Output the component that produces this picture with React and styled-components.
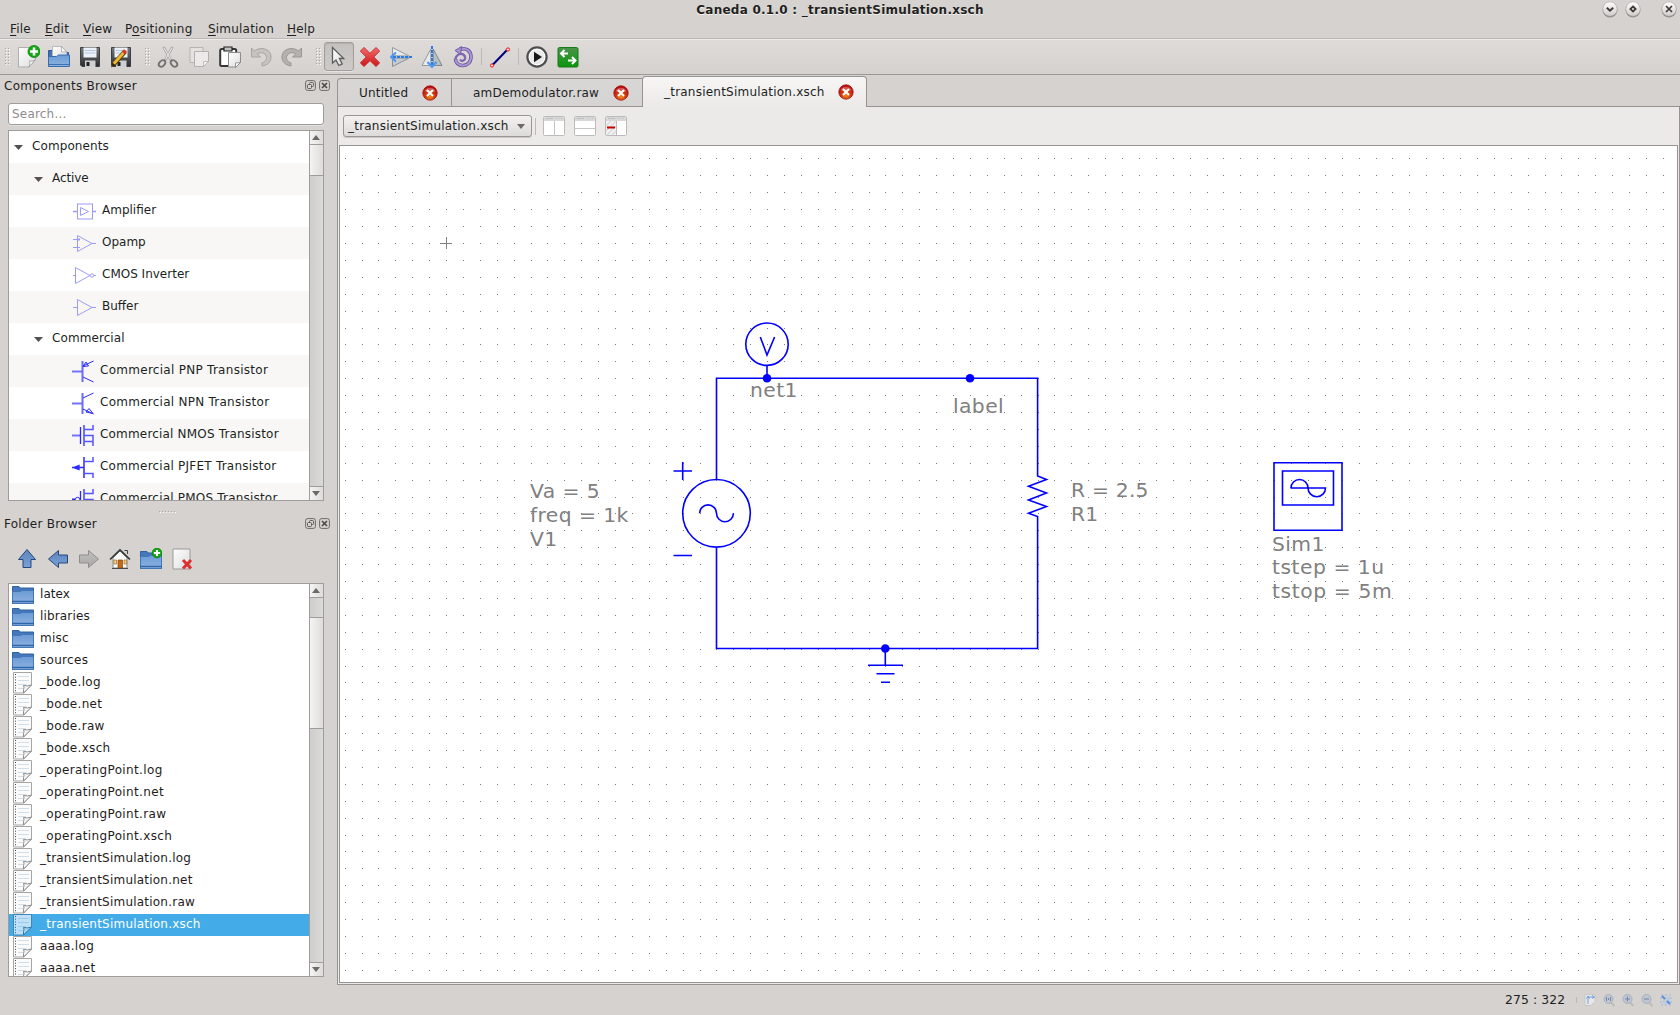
import React from "react";
import styled, { createGlobalStyle, css } from "styled-components";

const Global = createGlobalStyle`
  * { box-sizing: border-box; }
  html, body { margin: 0; padding: 0; overflow: hidden; }
  body { background: #d6d2cf; }
  svg { display: block; flex: none; }
`;

const Window = styled.div`
  width: 1680px;
  height: 1015px;
  display: flex;
  flex-direction: column;
  background: #d6d2cf;
  color: #221f1e;
  font: 12px/16px "DejaVu Sans", Verdana, sans-serif;
  letter-spacing: 0.2px;
  white-space: nowrap;
  overflow: hidden;
`;

/* ---------- title bar ---------- */
const TitleBar = styled.header`
  height: 19px;
  display: grid;
  grid-template-columns: 1fr auto 1fr;
  align-items: start;
`;
const Title = styled.h1`
  margin: 0;
  font-size: 12px;
  line-height: 20px;
  letter-spacing: 0.25px;
  text-shadow: 0 1px 0 #f4f2f1;
`;
const WindowButtons = styled.div`
  display: flex;
  justify-content: flex-end;
  padding-right: 2px;
`;

/* ---------- menu ---------- */
const MenuBar = styled.nav`
  height: 19px;
  padding: 0 0 0 10px;
  display: flex;
  line-height: 20px;
`;
const MenuItem = styled.span`
  width: ${(p) => p.$w}px;
  u { text-underline-offset: 2px; text-decoration-thickness: 1px; }
`;

/* ---------- toolbar ---------- */
const ToolBar = styled.div`
  height: 37px;
  border-top: 1px solid #bdb9b6;
  border-bottom: 1px solid #9c9896;
  box-shadow: inset 0 1px 0 #eceae8;
  background: linear-gradient(#dfdbd8, #d5d1ce);
  display: flex;
  align-items: center;
`;
const Handle = styled.span`
  width: ${(p) => p.$w}px;
  height: 18px;
  padding-left: ${(p) => p.$pad}px;
`;
const Tool = styled.button`
  width: 31px;
  height: 29px;
  padding: 0;
  border: 0;
  background: none;
  display: flex;
  align-items: center;
  justify-content: center;
  ${(p) => p.$pressed && css`
    border: 1px solid #a29e9b;
    border-radius: 3px;
    margin: 0 0 0 1px;
    width: 30px;
    background: linear-gradient(#c4c1be, #cdcac7);
    box-shadow: inset 0 1px 1px #b3afac, 0 1px 0 #e6e4e2;
  `}
`;
const Separator = styled.span`
  width: ${(p) => p.$w || 6}px;
  height: ${(p) => p.$h || 17}px;
  border-left: 1px solid #bcb8b5;
  margin-left: ${(p) => p.$ml || 0}px;
`;

/* ---------- work area ---------- */
const Main = styled.div`
  height: 910px;
  display: flex;
`;
const Side = styled.aside`
  width: 337px;
  display: flex;
  flex-direction: column;
`;
const DockTitle = styled.div`
  height: ${(p) => p.$h}px;
  padding: 3px 7px 0 4px;
  display: flex;
  align-items: flex-start;
  justify-content: space-between;
  letter-spacing: 0.25px;
`;
const DockButtons = styled.span`
  display: flex;
  gap: 3px;
  padding-top: 2px;
`;
const Search = styled.input.attrs({ placeholder: "Search..." })`
  width: 316px;
  height: 22px;
  margin: 0 0 5px 8px;
  padding: 0 3px;
  border: 1px solid #9f9b99;
  border-radius: 3px;
  background: #fff;
  font: inherit;
  letter-spacing: 0.2px;
  outline: none;
  box-shadow: 0 1px 0 #e4e1df;
  &::placeholder { color: #8f8c8b; opacity: 1; }
`;
const Box = styled.div`
  width: 316px;
  height: ${(p) => p.$h}px;
  margin-left: 8px;
  border: 1px solid #a09c9a;
  background: #fff;
  display: flex;
  overflow: hidden;
`;
const Rows = styled.div`
  width: 300px;
  overflow: hidden;
`;
const RowText = styled.span`
  padding-bottom: 2px;
  letter-spacing: ${(p) => p.$ls}px;
`;
const TreeRow = styled.div`
  height: 32px;
  display: flex;
  align-items: center;
  background: ${(p) => (p.$odd ? "#f8f7f5" : "#fff")};
  padding-left: ${(p) => p.$indent}px;
  gap: ${(p) => p.$gap}px;
`;
const FileRow = styled.div`
  height: 22px;
  display: flex;
  align-items: center;
  gap: 6px;
  padding-left: 3px;
  color: ${(p) => (p.$selected ? "#fff" : "#1f1c1b")};
  background: ${(p) => (p.$selected ? "#43ace8" : "transparent")};
`;
const ScrollBar = styled.div`
  width: 14px;
  border-left: 1px solid #a09c9a;
  background: linear-gradient(90deg, #cfcecd, #dadad9);
  display: flex;
  flex-direction: column;
`;
const ScrollPart = styled.span`
  height: ${(p) => p.$h}px;
  padding-right: 1px;
  background: ${(p) => (p.$trough ? "transparent" : "linear-gradient(90deg, #f4f4f3, #dddcdb)")};
  border-bottom: ${(p) => (p.$line ? "1px solid #a09c9a" : "0")};
  display: flex;
  align-items: center;
  justify-content: center;
`;
const Splitter = styled.div`
  height: 12px;
  display: flex;
  justify-content: center;
  padding: 10px 2px 0 0;
`;
const FolderTools = styled.div`
  display: flex;
  height: 38px;
  margin-bottom: 5px;
  padding-left: 11px;
  align-items: center;
`;

/* ---------- documents ---------- */
const Docs = styled.main`
  width: 1343px;
  display: flex;
  flex-direction: column;
`;
const Tabs = styled.div`
  height: 32px;
  display: flex;
  align-items: flex-end;
  border-bottom: 1px solid #979391;
`;
const Tab = styled.div`
  width: ${(p) => p.$w}px;
  height: ${(p) => (p.$active ? 31 : 28)}px;
  margin-bottom: ${(p) => (p.$active ? -1 : 0)}px;
  padding: 0 ${(p) => p.$pr}px ${(p) => (p.$active ? 1 : 0)}px 21px;
  display: flex;
  justify-content: space-between;
  align-items: center;
  letter-spacing: 0.22px;
  border: 1px solid #979391;
  border-bottom: 0;
  border-left-width: ${(p) => (p.$first || p.$active ? 1 : 0)}px;
  border-right-width: ${(p) => (p.$beforeActive ? 0 : 1)}px;
  border-radius: ${(p) => (p.$active ? "4px 4px 0 0" : p.$first ? "4px 0 0 0" : "0")};
  background: ${(p) => (p.$active ? "linear-gradient(#f7f6f5, #ebeae9)" : "linear-gradient(#d9d7d6, #d6d4d3)")};
`;
const Pane = styled.section`
  flex: none;
  height: 878px;
  border: 1px solid #979391;
  border-top: 0;
  background: #ebeae9;
  padding: 0 1px 1px;
`;
const DocBar = styled.div`
  height: 38px;
  padding: 0 0 0 4px;
  display: flex;
  align-items: center;
`;
const Combo = styled.button`
  width: 189px;
  height: 22px;
  padding: 0 6px 0 4px;
  display: flex;
  align-items: center;
  justify-content: space-between;
  border: 1px solid #9a9694;
  border-radius: 3px;
  background: linear-gradient(#f3f2f1, #dddbda);
  box-shadow: 0 1px 0 #c9c7c5;
  color: inherit;
  font: inherit;
  letter-spacing: 0.22px;
`;
const ViewButtons = styled.div`
  display: flex;
  gap: 9px;
  margin-left: 2px;
`;
const Canvas = styled.div`
  width: 1339px;
  height: 838px;
  background: #fff;
  border: 1px solid #979391;
`;

/* ---------- status ---------- */
const Status = styled.footer`
  height: 30px;
  padding: 0 6px 0 1505px;
  display: flex;
  align-items: center;
`;
const Coordinates = styled.span`
  width: 72px;
  font-size: 12.4px;
  letter-spacing: 0.1px;
`;
const StatusIcons = styled.div`
  display: flex;
  gap: 3px;
  opacity: 0.75;
`;

/* ---------- icons ---------- */
const Svg = ({ s = 22, w, h, children, ...rest }) => (
  <svg width={w || s} height={h || s} viewBox={`0 0 ${w || s} ${h || s}`} fill="none" {...rest}>{children}</svg>
);

const HiddenSvg = styled.svg`
  position: absolute;
`;
const Defs = () => (
  <HiddenSvg width="0" height="0">
    <defs>
      <linearGradient id="paper" x1="0" y1="0" x2="1" y2="1"><stop offset="0" stopColor="#fff" /><stop offset="1" stopColor="#dcdcdc" /></linearGradient>
      <linearGradient id="blue" x1="0" y1="0" x2="0" y2="1"><stop offset="0" stopColor="#6b9bd6" /><stop offset="1" stopColor="#8fb2e0" /></linearGradient>
      <linearGradient id="arrow" x1="0" y1="0" x2="0" y2="1"><stop offset="0" stopColor="#5c84bd" /><stop offset="1" stopColor="#7aa2d8" /></linearGradient>
      <linearGradient id="grayArrow" x1="0" y1="0" x2="0" y2="1"><stop offset="0" stopColor="#c2c0be" /><stop offset="1" stopColor="#aaa7a5" /></linearGradient>
      <linearGradient id="steel" x1="0" y1="0" x2="0" y2="1"><stop offset="0" stopColor="#777b80" /><stop offset="1" stopColor="#292b2e" /></linearGradient>
      <linearGradient id="red" x1="0" y1="0" x2="0" y2="1"><stop offset="0" stopColor="#f26a6a" /><stop offset="1" stopColor="#cf1414" /></linearGradient>
      <linearGradient id="green" x1="0" y1="0" x2="0" y2="1"><stop offset="0" stopColor="#4b934b" /><stop offset="1" stopColor="#0b970b" /></linearGradient>
      <radialGradient id="ball" cx=".5" cy=".75" r=".6"><stop offset="0" stopColor="#f08b12" /><stop offset=".55" stopColor="#cf3c10" /><stop offset="1" stopColor="#ba0c0c" /></radialGradient>
      <linearGradient id="knob" x1="0" y1="0" x2="0" y2="1"><stop offset="0" stopColor="#fff" /><stop offset="1" stopColor="#cfcbc8" /></linearGradient>
    </defs>
  </HiddenSvg>
);

const WinButton = ({ kind, gap = 0 }) => (
  <Svg w={18 + gap} h={18} viewBox={`${-gap} 0 ${18 + gap} 18`}>
    <circle cx="9" cy="10" r="7.4" fill="#8f8b88" />
    <circle cx="9" cy="9" r="7.2" fill="url(#knob)" stroke="#aaa6a3" strokeWidth=".6" />
    {kind === "min" && <path d="M5.8 7.8 9 10.8l3.2-3" stroke="#3d3a38" strokeWidth="1.9" />}
    {kind === "max" && <path d="M9 6.4 11.6 9 9 11.6 6.4 9z" stroke="#3d3a38" strokeWidth="1.8" />}
    {kind === "close" && <path d="m6 6 6 6m0-6-6 6" stroke="#3d3a38" strokeWidth="1.7" />}
  </Svg>
);

const Grip = ({ cols, rows }) => (
  <Svg w={cols * 3} h={rows * 3}>
    {Array.from({ length: cols * rows }, (_, i) => {
      const x = (i % cols) * 3, y = Math.floor(i / cols) * 3;
      return <g key={i}><rect x={x + 1} y={y + 1} width="1" height="1" fill="#fff" /><rect x={x} y={y} width="1" height="1" fill="#a9a5a2" /></g>;
    })}
  </Svg>
);

const Plus = ({ x, y, r }) => (
  <g>
    <circle cx={x} cy={y} r={r} fill="#17a817" stroke="#078107" strokeWidth=".8" />
    <path d={`M${x - r * 0.65} ${y}h${r * 1.3}M${x} ${y - r * 0.65}v${r * 1.3}`} stroke="#fff" strokeWidth={r * 0.42} />
  </g>
);

const Floppy = () => (
  <>
    <path d="M1.5 1.5h19v19H3l-1.500-1.500z" fill="url(#steel)" stroke="#3c3f43" />
    <path d="M4.500 1.500h13v10h-13z" fill="#edf2f8" />
    <path d="M5.500 4.500h11M5.500 7h11" stroke="#b2c6df" />
    <path d="M6 14.500h10.500V21H6z" fill="#cfd0d1" />
    <path d="M7.500 16h3v4h-3z" fill="#202224" />
  </>
);

const icons = {
  new: <Svg s={24}><path d="M2.500 2.500h17v12l-6.500 7.500H2.500z" fill="url(#paper)" stroke="#b1afad" /><path d="M13 22c1-2.500 1-4 .5-6 2 .5 4 0 6-1.500z" fill="#fff" stroke="#999" strokeWidth=".8" /><Plus x={18} y={6.500} r={6} /></Svg>,
  open: <Svg s={24}><path d="M1.500 21V5.500h6l1 2h13V21z" fill="#4273b5" stroke="#2d5c9c" /><path d="M5.500 14V1.500h9l5 5V14z" fill="url(#paper)" stroke="#b9b9b9" /><path d="M14.500 1.500v5.500h5z" fill="#fff" stroke="#999" strokeWidth=".7" /><path d="M1.500 11.500h8l2-1.500h11v11.500h-21z" fill="url(#blue)" stroke="#386cae" /><path d="M2 19.500h20" stroke="#3d71b3" /></Svg>,
  save: <Svg><Floppy /></Svg>,
  saveas: <Svg><Floppy /><path d="M3.500 18.500 15 5.500" stroke="#4f3c0d" strokeWidth="4.600" /><path d="M3.800 17.800 14.300 5.900" stroke="#eeb72f" strokeWidth="3" /><path d="m13.300 7 2.200-2.500" stroke="#d23a2c" strokeWidth="4" /><path d="m1 21.500 1.500-4.500 2.500 2.200z" fill="#35250a" /></Svg>,
  cut: <Svg><path d="M6.500 1 14 14.500M15.500 1 8 14.500" stroke="#999795" strokeWidth="2.500" /><path d="M6.800 1.500 13.500 13.500M15.200 1.500 8.500 13.500" stroke="#e9e8e7" strokeWidth="1.200" /><ellipse cx="5" cy="17.500" rx="3.700" ry="2.600" transform="rotate(-45 5 17.500)" stroke="#73706f" strokeWidth="1.900" /><ellipse cx="17" cy="17.500" rx="3.700" ry="2.600" transform="rotate(45 17 17.500)" stroke="#73706f" strokeWidth="1.900" /></Svg>,
  copy: <Svg><path d="M2 1.500h13v15H2z" fill="#e4e1df" stroke="#b7b3b0" /><path d="M6.500 5.500H20.500v10l-5 5h-9z" fill="#eceae8" stroke="#b3afac" /><path d="M15.500 20.500v-5h5z" fill="#f7f6f5" stroke="#b3afac" strokeWidth=".8" /></Svg>,
  paste: <Svg><rect x="1.200" y="3" width="16" height="17" rx="1.500" fill="#fff" stroke="#373737" strokeWidth="2" /><path d="M5 1h8v4H5z" fill="#bfc0c1" stroke="#222" strokeWidth="1.200" /><path d="M9.500 6.500h12v10l-4.500 4.500H9.500z" fill="url(#paper)" stroke="#8d8d8d" /><path d="M16.500 21.500V17l5-.5z" fill="#fff" stroke="#808080" strokeWidth=".8" /></Svg>,
  undo: <Svg><path d="M1.500 2v9h9L7.300 8c3-2.200 8-1.500 9 2.500.7 3-1.300 5.500-4.300 6.500v3c5-.6 9.500-4 9-10C20.300 2.500 10 .3 4.500 5z" fill="#c6c3c0" stroke="#a9a5a2" /></Svg>,
  redo: <Svg><path d="M20.500 2v9h-9L14.700 8c-3-2.200-8-1.500-9 2.500-.7 3 1.300 5.500 4.300 6.500v3c-5-.6-9.500-4-9-10C1.700 2.500 12 .3 17.500 5z" fill="#b4b1ae" stroke="#9a9794" /></Svg>,
  pointer: <Svg><path d="M4.500 1.500v15.500l3.500-3 2.800 5.500 3.400-1.600-2.800-5.400h4.300z" fill="url(#paper)" stroke="#5e5e5e" strokeWidth="1.300" /></Svg>,
  delete: <Svg><path d="m5 1.500 6 5.800 6-5.800 3.700 3.600-5.900 5.900 5.900 5.900-3.700 3.600-6-5.800-6 5.800-3.700-3.600L7.200 11 1.300 5.100z" fill="url(#red)" stroke="#c2373a" /></Svg>,
  flipv: <Svg><path d="M2.500 1.500v8.300L19 10z" fill="#e9eaeb" stroke="#97999b" /><path d="M2.500 20.500v-8.300L19 12z" fill="#c9cccf" stroke="#8d9093" /><path d="M3 11h19" stroke="#2a7be0" strokeWidth="2" strokeDasharray="3 1" /><path d="M6 6.500 1 11l5 4.500" stroke="#4a98f4" strokeWidth="2" /></Svg>,
  fliph: <Svg><path d="M9.800 3v16.500H1z" fill="#e9eaeb" stroke="#97999b" /><path d="M12.200 3v16.500H21z" fill="#b9bec3" stroke="#83878b" /><path d="M11 0v19" stroke="#2a7be0" strokeWidth="2" strokeDasharray="3 1" /><path d="m6.500 16 4.500 5 4.500-5" stroke="#4a98f4" strokeWidth="2" /></Svg>,
  rotate: <Svg><path d="M8 3.500c6-2.500 11 1.500 11 7.500s-5 9-9 8.500-6.500-3.500-6.500-6.500" stroke="#6b519f" strokeWidth="3.600" /><path d="M8 3.500c6-2.500 11 1.500 11 7.500s-5 9-9 8.500-6.500-3.500-6.500-6.500" stroke="#aa99d2" strokeWidth="1.900" /><path d="M3.500 13.500c0-4 3.500-6 6.500-5.500s4.500 5 1.500 6.500c-1.500.7-3 0-3.500-1" stroke="#7f69b2" strokeWidth="2.300" /><path d="M9.500.5 3 4.500l5.500 4z" fill="#a594ce" stroke="#765dab" /></Svg>,
  wire: <Svg><path d="M4 18.500 18 4" stroke="#00007f" strokeWidth="2" /><circle cx="3" cy="19.500" r="1.600" fill="#fff" stroke="#f00" /><circle cx="19" cy="3.500" r="1.600" fill="#fff" stroke="#f00" /></Svg>,
  play: <Svg><circle cx="11" cy="11" r="9.600" fill="#fff" stroke="#4e4e4e" strokeWidth="2.200" /><circle cx="11" cy="11" r="7.300" fill="#e9e9e9" /><path d="m8 5.800 8 5.200-8 5.200z" fill="#161616" /></Svg>,
  swap: <Svg><rect x="1" y="1.500" width="20" height="19.500" rx="1.500" fill="url(#green)" stroke="#187a18" /><path d="M11 7.500H4M7.500 4 4 7.500 7.500 11M11 14.500h7.500M15 11l3.500 3.500L15 18" stroke="#fff" strokeWidth="2" /></Svg>,
};

const Folder = ({ plus }) => (
  <Svg w={22} h={plus ? 22 : 20}>
    <g transform={plus ? "translate(0 2)" : undefined}>
      <path d="M.5 18.500V1.500H7L8 3h13.500v15.500z" fill="#4477bc" stroke="#30629f" />
      <path d="M.5 6.500h8L10 5.500h11.500v13H.5z" fill="url(#blue)" stroke="#4377b8" />
      <path d="M0 16.500h22" stroke="#2e66a9" strokeWidth="1.500" />
    </g>
    {plus && <Plus x={17} y={5} r={4.800} />}
  </Svg>
);

const FileIcon = ({ selected }) => (
  <Svg w={22} h={22}>
    <path d="M1.500.5h18v12.500l-7.500 8H1.500z" fill={selected ? "#bfe0f6" : "#fbfbfb"} stroke={selected ? "#3c87b8" : "#a5a5a5"} />
    <path d="M6 4.500h11M6 8.500h11M6 12.500h8M6 16.500h5" stroke={selected ? "#98cdee" : "#cfdfea"} />
    <path d="M3.500 2v18" stroke={selected ? "#2c5c7d" : "#444"} strokeDasharray="1 1.700" />
    <path d="M11.500 21v-3.500q1-1.500 0-4 4 1 8-.5z" fill={selected ? "#a6d5f3" : "#f4f4f4"} stroke={selected ? "#2d7bae" : "#8e8e8e"} />
  </Svg>
);

const TabClose = () => (
  <Svg s={16}><circle cx="8" cy="8" r="7.200" fill="url(#ball)" stroke="#a50e0e" strokeWidth=".8" /><path d="M2.500 6.500a5.700 5 0 0 1 11 0q-5.500 1.500-11 0z" fill="#fff" opacity=".28" /><path d="m5 5 6 6m0-6-6 6" stroke="#fff" strokeWidth="2" /></Svg>
);

const DockButton = ({ close }) => (
  <Svg s={11}><rect x=".6" y=".6" width="9.800" height="9.800" rx="2" stroke="#6d6967" />
    {close ? <path d="m3 3 5 5m0-5-5 5" stroke="#4d4a48" strokeWidth="1.700" /> : <><rect x="4.500" y="2.500" width="4" height="4" rx="1" stroke="#5d5a58" /><rect x="2.500" y="4.500" width="4" height="4" rx="1" fill="#d6d2cf" stroke="#5d5a58" /></>}
  </Svg>
);

const Triangle = ({ w = 9, up, color = "#545150" }) => (
  <Svg w={w} h={5}><path d={up ? `M0 5 ${w / 2} 0 ${w} 5z` : `M0 0h${w}L${w / 2} 5z`} fill={color} /></Svg>
);

const arrowShapes = {
  up: "M11 1.500 19.500 11.500H15v8H7v-8H2.500z",
  left: "M1.500 11 11.500 2.500V7h9v8h-9v4.500z",
  right: "M20.500 11 10.500 2.500V7h-9v8h9v4.500z",
};
const Arrow = ({ dir, gray }) => (
  <Svg><path d={arrowShapes[dir]} fill={gray ? "url(#grayArrow)" : "url(#arrow)"} stroke={gray ? "#8f8c8a" : "#27477a"} /></Svg>
);
const Home = () => (
  <Svg><path d="M4 10v10h14V10l-7-7z" fill="#fafafa" stroke="#8c8c8c" /><path d="M1 11.500 11 2l10 9.500" stroke="#353b3d" strokeWidth="1.700" /><path d="M15.500 2.500h3V6" stroke="#454545" /><path d="M9 12h4.500v8H9z" fill="#c36a17" stroke="#8b4510" strokeWidth=".7" /><path d="M4.800 12h2.700v4H4.800zM15 12h2.700v4H15z" fill="#f6cf87" stroke="#a87c35" strokeWidth=".8" /><path d="M3 20.500h16" stroke="#4b4b4b" /></Svg>
);
const DeleteFile = () => (
  <Svg><path d="M2 1h17v20H2z" fill="url(#paper)" stroke="#9b9998" /><path d="m12 12 8 8.500m0-8.500-8 8.500" stroke="#dd3030" strokeWidth="3" /></Svg>
);

const Layout = ({ kind }) => (
  <Svg w={22} h={20}><rect x=".5" y=".5" width="21" height="19" rx="1" fill="#fff" stroke="#bcbaba" />
    <path d="M1 3h20" stroke="#d9d8d8" strokeWidth="4" /><path d="M3 2.500h7M13 2.500h1M15.500 2.500h1M18 2.500h1" stroke="#c1c0c0" />
    {kind === "cols" && <path d="M11.500 5v15" stroke="#c7c6c6" />}
    {kind === "rows" && <path d="M1 12.500h20" stroke="#c7c6c6" />}
    {kind === "close" && <><path d="M1 5h10v14H1z" fill="#f2f2f2" /><path d="m1 10 5-5M1 15 11 5M2 19 11 10M7 19l4-4" stroke="#dadada" strokeWidth="1.500" /><path d="M11.500 5v15" stroke="#bcbaba" /><path d="M2 11.500h8" stroke="#c40000" strokeWidth="2" /></>}
  </Svg>
);

const parts = {
  amp: <g stroke="#9c9cf8"><path d="M0 11.500h4M19 11.500h4" strokeWidth="1.300" /><rect x="4.500" y="4" width="15" height="15" /><path d="M7.500 7.500v8l8-4z" /></g>,
  opamp: <g stroke="#9c9cf8"><path d="M4.500 3.500v16l14.500-8zM0 7.500h7M0 15.500h7M19 11.500h4M6 6v3" /></g>,
  inv: <g stroke="#9c9cf8"><path d="M2.500 3.500v16l14.500-8zM0 11.500h2.500M21 11.500h2" /><circle cx="19" cy="11.500" r="1.700" /></g>,
  buf: <g stroke="#9c9cf8"><path d="M4.500 3.500v16l14.500-8zM0 11.500h4.500M19 11.500h4" /></g>,
  pnp: <g stroke="#2a2aff"><path d="M0 11.500h10" stroke="#7272ff" strokeWidth="2" /><path d="M10.500 1v21" stroke="#6a6aff" strokeWidth="2" /><path d="m11 6 10.500-5M11 17l10.500 5M11 6.500l3-4.500 2.500 4z" /></g>,
  npn: <g stroke="#2a2aff"><path d="M0 11.500h10" stroke="#7272ff" strokeWidth="2" /><path d="M10.500 1v21" stroke="#6a6aff" strokeWidth="2" /><path d="m11 6 10.500-5M11 17l10.500 5M14 20l3-3.500 4 5z" /></g>,
  nmos: <g stroke="#2a2aff"><path d="M0 11.500h8" stroke="#7272ff" strokeWidth="2" /><path d="M8.500 3v17M12 1v21" strokeWidth="1.300" /><path d="M12 5.500h9V1M12 11.500h9V22M12 17.500h9" stroke="#5555ff" strokeWidth="1.500" /></g>,
  pjfet: <g stroke="#2a2aff"><path d="M0 11.500h12M1.500 11.500 7 9.500v4z" strokeWidth="1.300" fill="#7272ff" /><path d="M12 1v21" strokeWidth="1.500" /><path d="M12 5.500h9V1M12 17.500h9V22" stroke="#5555ff" strokeWidth="1.500" /></g>,
  pmos: <g stroke="#2a2aff"><path d="M0 11.500h3" strokeWidth="2" /><circle cx="5.500" cy="11.500" r="2.200" /><path d="M8.500 3v17M12 1v21" strokeWidth="1.300" /><path d="M12 5.500h9V1M12 11.500h9V22M12 17.500h9" stroke="#5555ff" strokeWidth="1.500" /></g>,
};

/* ---------- schematic ---------- */
const Wire = styled.g`
  stroke: #0000ff;
  stroke-width: 1.6;
  fill: none;
`;
const Label = styled.text`
  fill: #808080;
  font: 20.3px "DejaVu Sans", sans-serif;
  letter-spacing: ${(p) => p.$ls}px;
`;

const gridPath = (() => {
  let d = "";
  for (let r = 0; r < 49; r++)
    for (let c = 0; c < 79; c++)
      d += `M${Math.floor(345.1 + c * 16.9)} ${Math.floor(159.03 + r * 16.9 - (r === 0 ? 0.1 : 0))}h1v1h-1z`;
  return d;
})();

const labels = [
  [750, 396.7, "net1", 0.4], [953, 413.3, "label", 0.4],
  [530, 497.6, "Va = 5", 0.42], [530, 521.6, "freq = 1k", 0.42], [530, 545.6, "V1", 0.42],
  [1071, 497.4, "R = 2.5", 0.2], [1071, 521.4, "R1", 0.2],
  [1272, 550.5, "Sim1", 0.42], [1272, 574.1, "tstep = 1u", 0.52], [1272, 597.8, "tstop = 5m", 0.6],
];

const Schematic = () => (
  <svg width="1337" height="836" viewBox="340 146 1337 836">
    <path d={gridPath} fill="#7d7d7d" shapeRendering="crispEdges" />
    <path d="M440 243.500h12M446.500 237v12" stroke="#808080" />
    {labels.map(([x, y, t, ls]) => <Label key={t} x={x} y={y} $ls={ls}>{t}</Label>)}
    <Wire>
      <path d="M716.500 479V378.200H1037.600V476L1046.500 479.500 1028.500 486.300 1046.500 493 1028.500 500 1046.500 506.500 1028.500 513.300 1037.600 516.500V648.500H716.500V547.500" />
      <circle cx="767" cy="344.200" r="21.200" />
      <path d="M760.300 337 767 355 774.600 337M767 365.500V378" />
      <circle cx="716.500" cy="513.300" r="33.800" />
      <path d="M699.600 513.300a8.450 8.450 0 0 1 16.900 0a8.450 8.450 0 0 0 16.900 0" />
      <path d="M673.500 471h18.500M682.700 462v18M673.500 555.500h18.500" />
      <path d="M885.300 648.500V665.300M868 665.300H903M876.500 673.800h18M881 682.300h9" />
      <path d="M1274 462.700h68v67.600h-68zM1282.500 471h51v34h-51z" />
      <path d="M1290.500 488h35a8.500 8.500 0 0 1-17.500 0a8.500 8.500 0 0 0-17 0" />
      <g fill="#0000ff" stroke="none"><circle cx="767" cy="378.200" r="4.300" /><circle cx="970" cy="378.200" r="4.300" /><circle cx="885.300" cy="648.500" r="4.300" /></g>
    </Wire>
  </svg>
);

/* ---------- data ---------- */
const menu = [["", "F", "ile", 35], ["", "E", "dit", 38], ["", "V", "iew", 42], ["P", "o", "sitioning", 83], ["", "S", "imulation", 79], ["", "H", "elp", 40]];
const tree = [
  ["Components", 0, 0.1], ["Active", 1, -0.1],
  ["Amplifier", "amp", 0], ["Opamp", "opamp", 0], ["CMOS Inverter", "inv", 0], ["Buffer", "buf", 0],
  ["Commercial", 1, 0.08],
  ["Commercial PNP Transistor", "pnp", 0.28], ["Commercial NPN Transistor", "npn", 0.26], ["Commercial NMOS Transistor", "nmos", 0.18],
  ["Commercial PJFET Transistor", "pjfet", 0.23], ["Commercial PMOS Transistor", "pmos", 0.2],
];
const folders = [["latex", 0.05], ["libraries", 0.15], ["misc", 0.2], ["sources", 0.3]];
const exts = ["log", "net", "raw", "xsch"];
const files = [
  ...[["_bode", 0.32], ["_operatingPoint", 0.36], ["_transientSimulation", 0.22]].flatMap(([n, ls]) => exts.map((e) => [`${n}.${e}`, ls])),
  ["aaaa.log", 0.32], ["aaaa.net", 0.32],
];

const Scroll = ({ children }) => (
  <ScrollBar>
    <ScrollPart $h={14} $line><Triangle w={8} up color="#6c6967" /></ScrollPart>
    {children}
    <ScrollPart $h={13}><Triangle w={8} color="#6c6967" /></ScrollPart>
  </ScrollBar>
);

const Magnifier = ({ children }) => (
  <Svg s={16}><path d="m9.500 10 4 4" stroke="#b7b5b3" strokeWidth="2" /><circle cx="7.500" cy="7" r="4.500" fill="#b6c3d6" stroke="#9ba6b6" /><g stroke="#536e96">{children}</g></Svg>
);

export default function App() {
  return (
    <Window>
      <Global />
      <Defs />
      <TitleBar>
        <span />
        <Title>Caneda 0.1.0 : _transientSimulation.xsch</Title>
        <WindowButtons><WinButton kind="min" /><WinButton kind="max" gap={5} /><WinButton kind="close" gap={18} /></WindowButtons>
      </TitleBar>
      <MenuBar>{menu.map(([a, u, b, w]) => <MenuItem key={b} $w={w}>{a}<u>{u}</u>{b}</MenuItem>)}</MenuBar>
      <ToolBar>
        <Handle $w={12} $pad={5}><Grip cols={2} rows={6} /></Handle>
        {["new", "open", "save", "saveas"].map((k) => <Tool key={k}>{icons[k]}</Tool>)}
        <Handle $w={16} $pad={9}><Grip cols={2} rows={6} /></Handle>
        {["cut", "copy", "paste", "undo", "redo"].map((k) => <Tool key={k}>{icons[k]}</Tool>)}
        <Handle $w={16} $pad={9}><Grip cols={2} rows={6} /></Handle>
        {["pointer", "delete", "flipv", "fliph", "rotate"].map((k) => <Tool key={k} $pressed={k === "pointer"}>{icons[k]}</Tool>)}
        <Separator $ml={3} $w={3} />
        <Tool>{icons.wire}</Tool>
        <Separator $ml={3} $w={3} />
        <Tool>{icons.play}</Tool>
        <Tool>{icons.swap}</Tool>
      </ToolBar>
      <Main>
        <Side>
          <DockTitle $h={28}>Components Browser<DockButtons><DockButton /><DockButton close /></DockButtons></DockTitle>
          <Search />
          <Box $h={371}>
            <Rows>
              {tree.map(([name, kind, ls], i) => {
                const group = typeof kind === "number";
                const faint = i >= 2 && i <= 5;
                return (
                  <TreeRow key={name} $odd={i % 2} $indent={group ? 5 + kind * 20 : faint ? 64 : 63} $gap={group ? 9 : faint ? 6 : 5}>
                    {group ? <Triangle /> : <Svg s={23}>{parts[kind]}</Svg>}
                    <RowText $ls={ls}>{name}</RowText>
                  </TreeRow>
                );
              })}
            </Rows>
            <Scroll><ScrollPart $h={31} $line /><ScrollPart $h={311} $trough $line /></Scroll>
          </Box>
          <Splitter><Grip cols={6} rows={1} /></Splitter>
          <DockTitle $h={27}>Folder Browser<DockButtons><DockButton /><DockButton close /></DockButtons></DockTitle>
          <FolderTools>
            <Tool><Arrow dir="up" /></Tool><Tool><Arrow dir="left" /></Tool><Tool><Arrow dir="right" gray /></Tool>
            <Tool><Home /></Tool><Tool><Folder plus /></Tool><Tool><DeleteFile /></Tool>
          </FolderTools>
          <Box $h={394}>
            <Rows>
              {folders.map(([f, ls]) => <FileRow key={f}><Folder /><RowText $ls={ls}>{f}</RowText></FileRow>)}
              {files.map(([f, ls]) => {
                const selected = f === "_transientSimulation.xsch";
                return <FileRow key={f} $selected={selected}><FileIcon selected={selected} /><RowText $ls={ls}>{f}</RowText></FileRow>;
              })}
            </Rows>
            <Scroll><ScrollPart $h={20} $trough $line /><ScrollPart $h={111} $line /><ScrollPart $h={234} $trough $line /></Scroll>
          </Box>
        </Side>
        <Docs>
          <Tabs>
            <Tab $w={115} $pr={13} $first>Untitled<TabClose /></Tab>
            <Tab $w={190} $pr={13} $beforeActive>amDemodulator.raw<TabClose /></Tab>
            <Tab $w={225} $pr={12} $active>_transientSimulation.xsch<TabClose /></Tab>
          </Tabs>
          <Pane>
            <DocBar>
              <Combo>_transientSimulation.xsch<Triangle w={8} color="#6c6967" /></Combo>
              <Separator $ml={3} />
              <ViewButtons><Layout kind="cols" /><Layout kind="rows" /><Layout kind="close" /></ViewButtons>
            </DocBar>
            <Canvas><Schematic /></Canvas>
          </Pane>
        </Docs>
      </Main>
      <Status>
        <Coordinates>275 : 322</Coordinates>
        <Separator $h={6} />
        <StatusIcons>
          <Svg s={16}><path d="M3 2.500h10v7L9 13.500H3z" fill="#eef0f2" stroke="#c4c2c0" /><path d="M6 12V5h6M4.500 6.500 6 4l1.500 2.500M10 3.500 12.500 5 10 6.500" stroke="#4d8fe5" /></Svg>
          <Magnifier><path d="M5.500 5v4M7.500 6v2M9.500 5v4" /></Magnifier>
          <Magnifier><path d="M5 7h5M7.500 4.500v5" /></Magnifier>
          <Magnifier><path d="M5 7h5" /></Magnifier>
          <Svg s={16}><path d="M5 5h7v7H5z" fill="#b8c8df" /><path d="M3 3h10v10H3z" stroke="#8baee5" strokeDasharray="2 2" /><path d="m4 4 3 3M9 9l3 3" stroke="#2e78e6" strokeWidth="2" /></Svg>
        </StatusIcons>
      </Status>
    </Window>
  );
}
